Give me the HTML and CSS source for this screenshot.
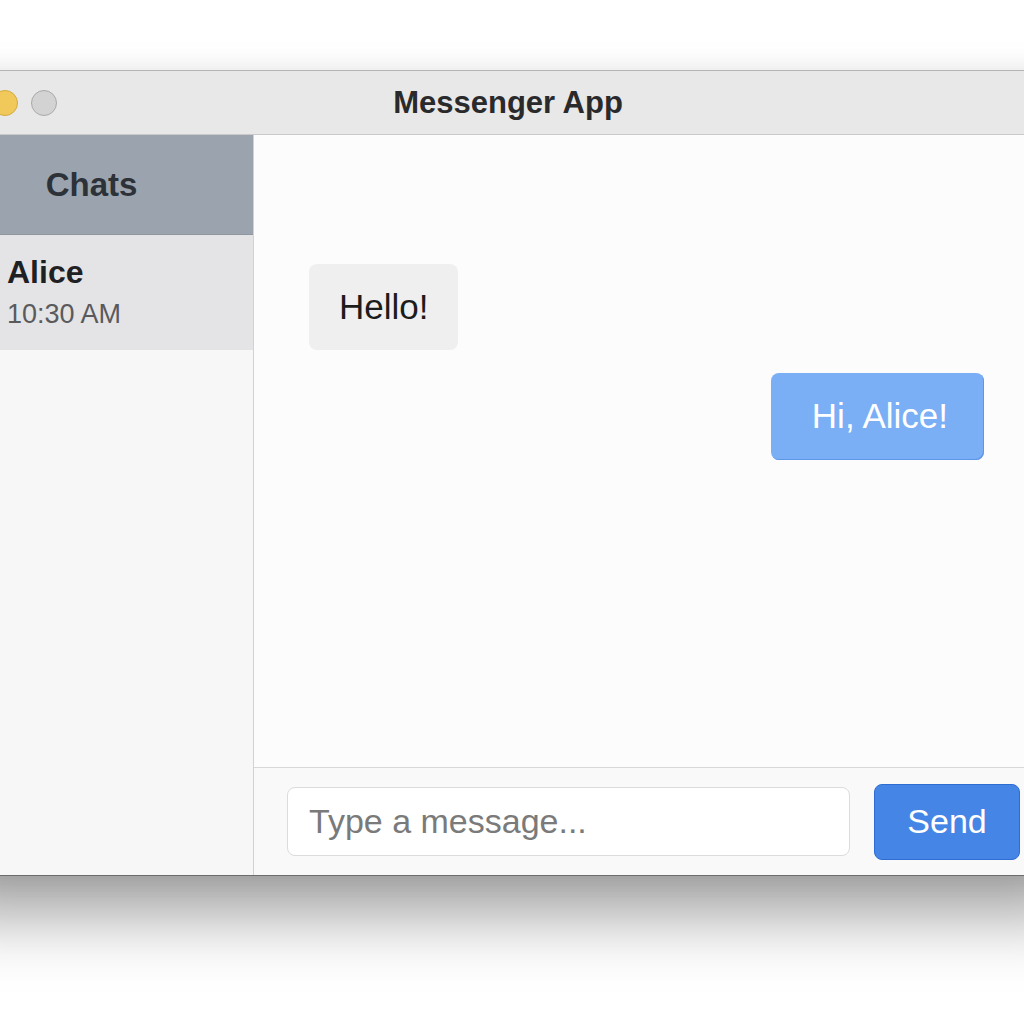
FILE: index.html
```html
<!DOCTYPE html>
<html lang="en">
<head>
<meta charset="utf-8">
<title>Messenger App</title>
<link rel="stylesheet" href="styles.css">
</head>
<body>
  <div class="window">
    <div class="titlebar">
      <div class="lights">
        <span class="light red"></span>
        <span class="light yellow"></span>
        <span class="light gray"></span>
      </div>
      <div class="title">Messenger App</div>
      <div></div>
    </div>
    <div class="content">
      <aside class="sidebar">
        <div class="sidebar-header">Chats</div>
        <div class="chat-item">
          <div class="chat-name">Alice</div>
          <div class="chat-time">10:30 AM</div>
        </div>
      </aside>
      <main class="main">
        <div class="messages">
          <div class="bubble incoming">Hello!</div>
          <div class="bubble outgoing">Hi, Alice!</div>
        </div>
        <div class="composer">
          <div class="input"><span class="placeholder">Type a message...</span></div>
          <button class="send">Send</button>
        </div>
      </main>
    </div>
  </div>
</body>
</html>
```
FILE: styles.css
```css
html, body {
  margin: 0;
  padding: 0;
  background: #ffffff;
  overflow: hidden;
  height: 1024px;
}
body {
  padding-top: 70px;
  box-sizing: border-box;
  font-family: "Liberation Sans", Arial, sans-serif;
}
.window {
  margin-left: -70px;
  width: 1156px;
  height: 806px;
  box-sizing: border-box;
  border-top: 1px solid #b4b4b4;
  border-bottom: 1px solid #6c6c6c;
  background: #fcfcfc;
  display: flex;
  flex-direction: column;
  box-shadow: 0 44px 64px -6px rgba(0,0,0,0.38), 0 0 24px rgba(0,0,0,0.08);
}
.titlebar {
  height: 64px;
  box-sizing: border-box;
  border-bottom: 1px solid #c9c9c9;
  background: #e8e8e8;
  display: grid;
  grid-template-columns: 1fr auto 1fr;
  align-items: center;
}
.lights {
  display: flex;
  gap: 13px;
  padding-left: 23px;
}
.light {
  width: 26px;
  height: 26px;
  border-radius: 50%;
  box-sizing: border-box;
}
.red { background: #ec6a5e; border: 1px solid #d0524a; }
.yellow { background: #f0c95a; border: 1px solid #d4aa3c; }
.gray { background: #d3d3d3; border: 1px solid #a9a9a9; }
.title {
  font-size: 31px;
  font-weight: bold;
  color: #2a2a2c;
  padding-top: 1px;
}
.content {
  flex: 1;
  display: flex;
  min-height: 0;
}
.sidebar {
  width: 324px;
  box-sizing: border-box;
  border-right: 1px solid #d2d2d2;
  background: #f7f7f7;
  display: flex;
  flex-direction: column;
}
.sidebar-header {
  height: 99px;
  background: #9ba3ae;
  display: flex;
  align-items: center;
  justify-content: center;
  font-size: 33px;
  font-weight: bold;
  color: #2d3138;
  border-bottom: 1px solid #8e96a0;
}
.chat-item {
  height: 115px;
  box-sizing: border-box;
  background: #e4e4e6;
  padding: 19px 0 0 77px;
}
.chat-name {
  font-size: 32px;
  line-height: 36px;
  font-weight: bold;
  color: #1f2024;
}
.chat-time {
  margin-top: 8px;
  font-size: 27px;
  line-height: 32px;
  color: #5a5a5c;
}
.main {
  flex: 1;
  display: flex;
  flex-direction: column;
  background: #fcfcfc;
}
.messages {
  flex: 1;
  padding: 129px 102px 0 55px;
  display: flex;
  flex-direction: column;
  gap: 23px;
}
.bubble {
  font-size: 35px;
  line-height: 40px;
  padding: 23px 30px;
  border-radius: 8px;
}
.incoming {
  align-self: flex-start;
  background: #efefef;
  color: #1c1c1c;
}
.outgoing {
  align-self: flex-end;
  background: #7aaef5;
  color: #ffffff;
  padding: 23px 36px 24px 41px;
  box-shadow: inset -1px -1px 0 #5f97e8;
}
.composer {
  height: 108px;
  box-sizing: border-box;
  border-top: 1px solid #d8d8d8;
  background: #f9f9f9;
  display: flex;
  align-items: center;
  gap: 24px;
  padding: 0 66px 0 33px;
}
.input {
  flex: 1;
  height: 69px;
  box-sizing: border-box;
  background: #ffffff;
  border: 1px solid #dcdcdc;
  border-radius: 8px;
  display: flex;
  align-items: center;
  padding-left: 21px;
}
.placeholder {
  font-size: 34px;
  color: #7a7a7a;
}
.send {
  width: 146px;
  height: 76px;
  box-sizing: border-box;
  background: #4585e5;
  border: 1px solid #2f6dd2;
  border-radius: 8px;
  color: #ffffff;
  font-family: "Liberation Sans", Arial, sans-serif;
  font-size: 34px;
  padding: 0;
}
```
